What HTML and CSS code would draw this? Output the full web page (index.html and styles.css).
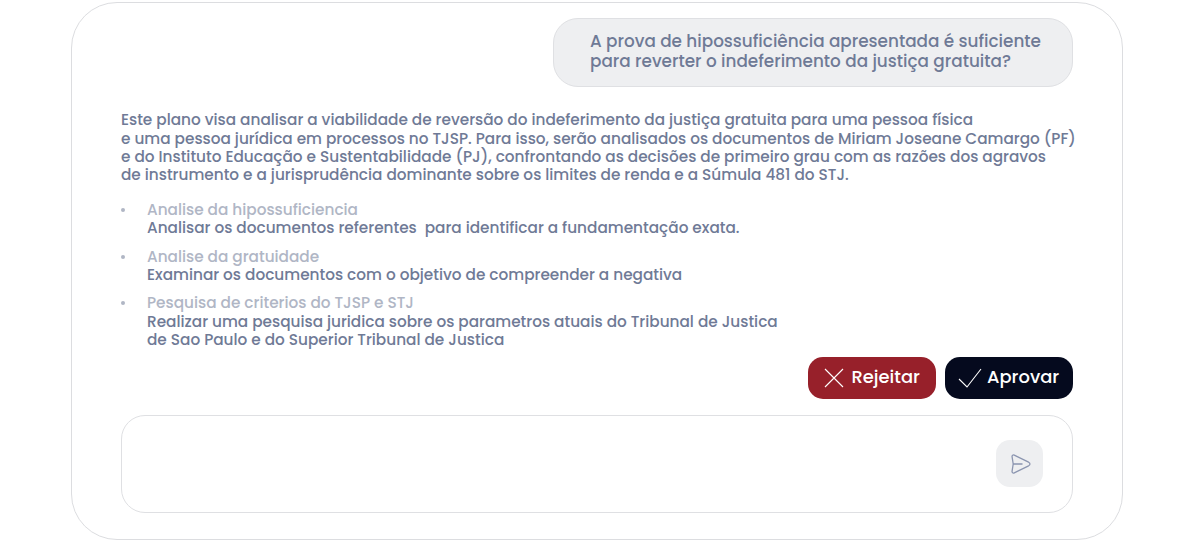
FILE: index.html
```html
<!DOCTYPE html>
<html lang="pt-BR">
<head>
    <meta charset="UTF-8">
    <meta name="viewport" content="width=device-width, initial-scale=1.0">
    <title>Plano de análise</title>
    <link rel="stylesheet" href="styles.css">
</head>
<body>
    <main class="chat">
        <div class="question">
            A prova de hipossuficiência apresentada é suficiente<br>
            para reverter o indeferimento da justiça gratuita?
        </div>

        <section class="plan">
            <p class="intro">
                Este plano visa analisar a viabilidade de reversão do indeferimento da justiça gratuita para uma pessoa física<br>
                e uma pessoa jurídica em processos no TJSP. Para isso, serão analisados os documentos de Miriam Joseane Camargo (PF)<br>
                e do Instituto Educação e Sustentabilidade (PJ), confrontando as decisões de primeiro grau com as razões dos agravos<br>
                de instrumento e a jurisprudência dominante sobre os limites de renda e a Súmula 481 do STJ.
            </p>

            <ul class="steps">
                <li>
                    <h3>Analise da hipossuficiencia</h3>
                    <p>Analisar os documentos referentes&nbsp; para identificar a fundamentação exata.</p>
                </li>
                <li>
                    <h3>Analise da gratuidade</h3>
                    <p>Examinar os documentos com o objetivo de compreender a negativa</p>
                </li>
                <li>
                    <h3>Pesquisa de criterios do TJSP e STJ</h3>
                    <p>Realizar uma pesquisa juridica sobre os parametros atuais do Tribunal de Justica<br>
                    de Sao Paulo e do Superior Tribunal de Justica</p>
                </li>
            </ul>
        </section>

        <div class="actions">
            <button class="btn reject">
                <svg width="20" height="20" viewBox="0 0 20 20"><path d="M1 1l18 18M19 1L1 19"/></svg>
                <span>Rejeitar</span>
            </button>
            <button class="btn approve">
                <svg width="24" height="20" viewBox="0 0 24 20"><path d="M1 11l8 8L23 1"/></svg>
                <span>Aprovar</span>
            </button>
        </div>

        <div class="composer">
            <button class="send" aria-label="Enviar">
                <svg width="20" height="20" viewBox="0 0 20 20"><path d="M1.1 2.9C.8 1.3 2 .6 3.3 1.1L17.6 8.2C19.4 9.2 19.4 10.8 17.6 11.8L3.3 18.9C2 19.4.8 18.7 1.1 17.1L2.2 10ZM2.2 10H11.5"/></svg>
            </button>
        </div>
    </main>
</body>
</html>
```
FILE: styles.css
```css
* {
    box-sizing: border-box;
}

body {
    margin: 0;
    padding: 2px 71px;
    background-color: #fff;
    color: #6f7a96;
    font-family: Poppins, Inter, sans-serif;
    font-weight: 500;
}

.chat {
    display: flex;
    flex-direction: column;
    height: 538px;
    padding: 15px 49px 26px;
    border: 1px solid #dcdde0;
    border-radius: 46px;
}

.question {
    align-self: flex-end;
    width: 520px;
    height: 69px;
    padding: 12px 0 0 36px;
    background-color: #eeeff1;
    border: 1px solid #dfe0e3;
    border-radius: 25px;
    font-size: 16.84px;
    line-height: 20px;
    white-space: nowrap;
}

.plan {
    height: 270px;
    padding-top: 24.3px;
    font-size: 15.3px;
    line-height: 18.3px;
    white-space: nowrap;
}

.plan p {
    margin: 0;
}

.steps {
    list-style: none;
    margin: 16.7px 0 0;
    padding: 0 0 0 26px;
}

.steps li {
    position: relative;
    margin-bottom: 10px;
}

.steps li::before {
    content: "";
    position: absolute;
    left: -26px;
    top: 7px;
    width: 4px;
    height: 4px;
    border-radius: 50%;
    background-color: #b0b6c5;
}

.steps h3 {
    margin: 0;
    color: #b0b6c5;
    font-size: inherit;
    font-weight: 500;
}

.actions {
    display: flex;
    justify-content: flex-end;
    gap: 9.5px;
}

.btn {
    display: flex;
    align-items: center;
    width: 128px;
    height: 42px;
    padding: 0 0 2px 16px;
    border: none;
    border-radius: 15px;
    color: #fff;
    font: inherit;
    font-size: 17.9px;
}

.btn span {
    position: relative;
    top: -1px;
}

.btn svg,
.send svg {
    fill: none;
    stroke: #fff;
    stroke-width: 1.1;
}

.btn svg {
    position: relative;
    top: 1px;
}

.reject {
    gap: 8px;
    background-color: #97202a;
}

.approve {
    gap: 5px;
    padding-left: 13px;
    background-color: #050a1e;
}

.composer {
    display: flex;
    justify-content: flex-end;
    align-items: center;
    height: 98px;
    margin-top: 16px;
    padding: 0 29px 1px 0;
    border: 1px solid #dfe0e3;
    border-radius: 24px;
}

.send {
    display: flex;
    align-items: center;
    justify-content: center;
    width: 47px;
    height: 47px;
    padding: 1px 0 0 2px;
    border: none;
    border-radius: 14px;
    background-color: #eeeff1;
}

.send svg {
    stroke: #8b95b0;
    stroke-width: 1.3;
    stroke-linejoin: round;
}
```
